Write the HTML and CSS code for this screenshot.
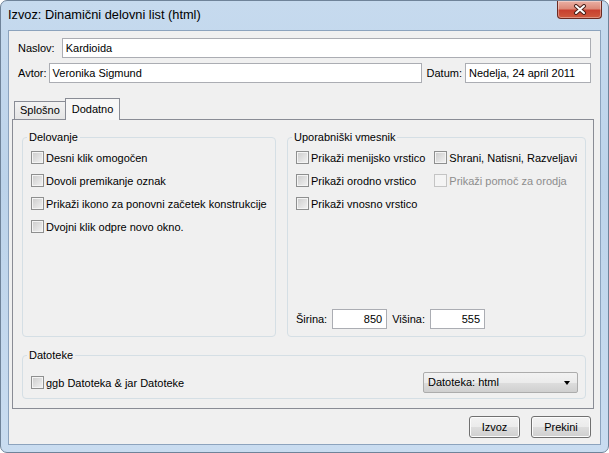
FILE: index.html
```html
<!DOCTYPE html>
<html lang="sl">

<head>
    <meta charset="UTF-8">
    <title>Izvoz: Dinamični delovni list (html)</title>
    <link rel="stylesheet" href="styles.css">
</head>

<body>
    <div class="window">
        <div class="titlebar">
            <span class="title">Izvoz: Dinamični delovni list (html)</span>
            <div class="close">
                <svg width="14" height="11" viewBox="0 0 14 11">
                    <path d="M3 2 L11 9 M11 2 L3 9" stroke="#4a2019" stroke-width="4" stroke-linecap="round" fill="none" />
                    <path d="M3 2 L11 9 M11 2 L3 9" stroke="#ffffff" stroke-width="2" stroke-linecap="round" fill="none" />
                </svg>
            </div>
        </div>

        <div class="client">
            <div class="fields">
                <div class="row">
                    <span class="lbl naslov">Naslov:</span>
                    <div class="field grow">Kardioida</div>
                </div>
                <div class="row">
                    <span class="lbl avtor">Avtor:</span>
                    <div class="field grow">Veronika Sigmund</div>
                    <span class="lbl datum">Datum:</span>
                    <div class="field date">Nedelja, 24 april 2011</div>
                </div>
            </div>

            <div class="tabs">
                <div class="tab">Splošno</div>
                <div class="tab active">Dodatno</div>
            </div>

            <div class="panel">
                <div class="groups">
                    <fieldset class="group">
                        <legend>Delovanje</legend>
                        <div class="group_body">
                            <label class="check"><span class="box"></span>Desni klik omogočen</label>
                            <label class="check"><span class="box"></span>Dovoli premikanje oznak</label>
                            <label class="check"><span class="box"></span>Prikaži ikono za ponovni začetek konstrukcije</label>
                            <label class="check"><span class="box"></span>Dvojni klik odpre novo okno.</label>
                        </div>
                    </fieldset>

                    <fieldset class="group">
                        <legend>Uporabniški vmesnik</legend>
                        <div class="group_body">
                            <div class="check_grid">
                                <label class="check"><span class="box"></span>Prikaži menijsko vrstico</label>
                                <label class="check"><span class="box"></span>Shrani, Natisni, Razveljavi</label>
                                <label class="check"><span class="box"></span>Prikaži orodno vrstico</label>
                                <label class="check disabled"><span class="box"></span>Prikaži pomoč za orodja</label>
                                <label class="check"><span class="box"></span>Prikaži vnosno vrstico</label>
                            </div>
                            <div class="size_row">
                                <span class="lbl">Širina:</span>
                                <div class="field num">850</div>
                                <span class="lbl">Višina:</span>
                                <div class="field num">555</div>
                            </div>
                        </div>
                    </fieldset>
                </div>

                <fieldset class="group files">
                    <legend>Datoteke</legend>
                    <div class="files_body">
                        <label class="check"><span class="box"></span>ggb Datoteka &amp; jar Datoteke</label>
                        <div class="combo">Datoteka: html<span class="arrow"></span></div>
                    </div>
                </fieldset>
            </div>

            <div class="buttons">
                <div class="btn izvoz">Izvoz</div>
                <div class="btn prekini">Prekini</div>
            </div>
        </div>
    </div>
</body>

</html>
```

FILE: styles.css
```css
* {
    box-sizing: border-box;
    margin: 0;
    padding: 0;
}

body {
    width: 609px;
    height: 453px;
    background: #ffffff;
    font-family: "Liberation Sans", Arial, sans-serif;
    font-size: 11px;
    color: #000;
    overflow: hidden;
}

.window {
    width: 609px;
    height: 453px;
    border: 1px solid #6f8399;
    border-radius: 7px;
    background: linear-gradient(180deg, #c6daee 0%, #bcd3ea 40%, #c9dcf0 100%);
    display: flex;
    flex-direction: column;
}

.titlebar {
    height: 29px;
    display: flex;
    justify-content: space-between;
    align-items: flex-start;
    padding: 0 6px 0 7px;
}

.title {
    font-size: 12.8px;
    margin-top: 6px;
    color: #000;
}

.close {
    width: 45px;
    height: 18px;
    border: 1px solid #6b2a22;
    border-top: none;
    border-radius: 0 0 4px 4px;
    background: linear-gradient(180deg, #eab0a4 0%, #dc8a79 45%, #c8402f 55%, #cf5a3e 100%);
    box-shadow: inset 0 0 0 1px rgba(255, 255, 255, 0.35);
    display: flex;
    justify-content: center;
    align-items: center;
}

.client {
    flex: 1;
    margin: 0 7px 7px 7px;
    border: 1px solid #8ca3bd;
    background: #f0f0f0;
    display: flex;
    flex-direction: column;
}

.fields {
    padding: 7px 9px 0 9px;
}

.row {
    display: flex;
    align-items: center;
    height: 20px;
}

.row + .row {
    margin-top: 5px;
}

.lbl {
    margin-right: 5px;
    white-space: nowrap;
}

.naslov {
    margin-right: 7px;
}

.avtor {
    margin-right: 2px;
}

.datum {
    margin-left: 5px;
    margin-right: 3px;
}

.field {
    height: 20px;
    border: 1px solid #abadb3;
    background: #fff;
    padding: 0 3px;
    line-height: 18px;
    white-space: nowrap;
}

.grow {
    flex: 1;
}

.date {
    width: 126px;
}

/* tabs */
.tabs {
    display: flex;
    align-items: flex-end;
    height: 22px;
    margin-top: 14px;
    padding-left: 5px;
    position: relative;
    z-index: 1;
}

.tab {
    height: 18px;
    padding: 0 5px 0 5px;
    border: 1px solid #898c95;
    border-bottom: none;
    background: linear-gradient(180deg, #f2f2f2, #e5e5e5);
    line-height: 17px;
}

.tab.active {
    height: 22px;
    margin-left: -1px;
    margin-bottom: -1px;
    padding: 0 6px;
    background: #f7f7f7;
    line-height: 20px;
}

.panel {
    margin: 0 6px 0 3px;
    border: 1px solid #898c95;
    background: #f0f0f0;
    padding: 10px 7px 9px 9px;
}

.groups {
    display: grid;
    grid-template-columns: 254px 1fr;
    column-gap: 11px;
    height: 207px;
}

.group {
    border: 1px solid #d5dfe5;
    border-radius: 4px;
    padding: 0 7px 7px 8px;
    min-width: 0;
}

.group legend {
    padding: 0 2px;
    margin-left: -4px;
    line-height: 14px;
}

.group_body {
    display: flex;
    flex-direction: column;
    height: 100%;
    padding-top: 2px;
}

.check {
    display: flex;
    align-items: center;
    height: 23px;
    white-space: nowrap;
}

.box {
    width: 13px;
    height: 13px;
    margin-right: 2px;
    border: 1px solid #8e8f8f;
    background: linear-gradient(135deg, #cbcbcb, #f3f3f3);
    box-shadow: inset 0 0 0 1px #f4f4f4;
    flex-shrink: 0;
}

.check.disabled {
    color: #8d8d8d;
}

.check.disabled .box {
    border-color: #c4c4c4;
    background: #f4f4f4;
}

.check_grid {
    display: grid;
    grid-template-columns: auto auto;
    column-gap: 9px;
    justify-content: start;
}

.size_row {
    margin-top: auto;
    display: flex;
    align-items: center;
}

.num {
    width: 55px;
    text-align: right;
    padding-right: 4px;
}

.num + .lbl {
    margin-left: 5px;
}

/* files */
.files {
    margin-top: 11px;
    padding-bottom: 4px;
}

.files_body {
    display: flex;
    justify-content: space-between;
    align-items: center;
    padding-top: 9px;
}

.combo {
    width: 155px;
    height: 21px;
    border: 1px solid #acacac;
    border-radius: 2px;
    background: linear-gradient(180deg, #f2f2f2 0%, #ebebeb 50%, #dddddd 51%, #cfcfcf 100%);
    padding: 0 4px;
    line-height: 19px;
    display: flex;
    justify-content: space-between;
    align-items: center;
}

.arrow {
    width: 0;
    height: 0;
    border-top: 4px solid #000;
    border-left: 3.5px solid transparent;
    border-right: 3.5px solid transparent;
    margin-right: 3px;
}

/* buttons */
.buttons {
    margin-top: auto;
    display: flex;
    justify-content: flex-end;
    gap: 11px;
    padding: 0 9px 6px 0;
}

.btn {
    height: 22px;
    border: 1px solid #707070;
    border-radius: 3px;
    background: linear-gradient(180deg, #f2f2f2 0%, #ebebeb 50%, #dddddd 51%, #cfcfcf 100%);
    box-shadow: inset 0 0 0 1px #fcfcfc;
    display: flex;
    justify-content: center;
    align-items: center;
}

.izvoz {
    width: 51px;
}

.prekini {
    width: 60px;
}
```
